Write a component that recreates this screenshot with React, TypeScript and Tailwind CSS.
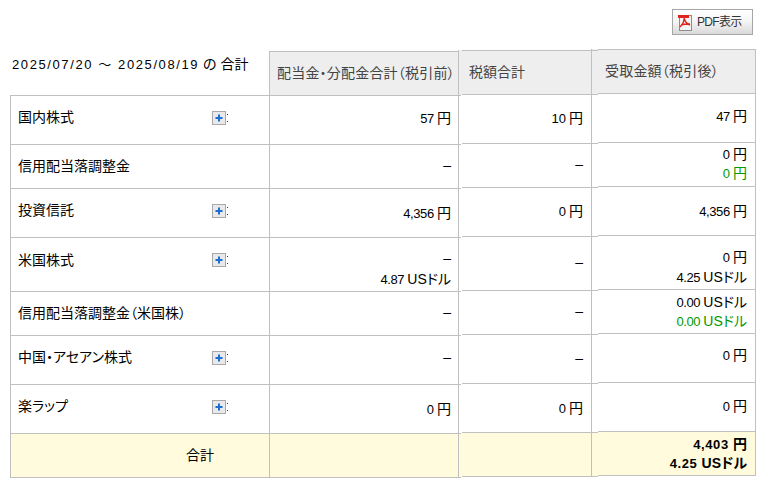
const font = "[font-family:'Liberation_Sans','Noto_Sans_CJK_JP',sans-serif] [font-feature-settings:'palt']";

function Num({ v, unit, bold }: { v: string; unit: string; bold?: boolean }) {
  const spaced = v.endsWith(" ");
  return (
    <span>
      <span className={bold ? "text-[13px] tracking-[0.6px]" : spaced ? "text-[13px] tracking-[-0.4px]" : "text-[13px] pr-[3px]"}>{v}</span>
      {unit}
    </span>
  );
}

function PlusIcon({ className }: { className: string }) {
  return (
    <svg width="17" height="15" viewBox="0 0 17 15" className={`shrink-0 ${className}`}>
      <rect x="0.5" y="0.5" width="13" height="13" fill="#e9e9e9" stroke="#a8a8a8" />
      <path d="M6 3.5h2V6h2.5v2H8v2.5H6V8H3.5V6H6z" fill="#1b6fd1" />
      <rect x="15" y="3" width="1" height="1" fill="#333" />
      <rect x="15" y="10" width="1" height="1" fill="#333" />
    </svg>
  );
}

function PdfIcon() {
  return (
    <svg width="15" height="17" viewBox="0 0 15 17" className="shrink-0">
      <rect x="1.5" y="1.5" width="12" height="15" fill="#f4f4f4" stroke="#8c8c8c" />
      <rect x="0" y="1" width="11" height="3" fill="#e0261c" />
      <path d="M6 4c1 4 3 6 6 7M6 5c0 3-2 6-4 8M3 11c3-1 6-1 9-1" fill="none" stroke="#e0261c" strokeWidth="1.4" />
    </svg>
  );
}

const heights = ["h-[49px]", "h-[44px]", "h-[49px]", "h-[54px]", "h-[44px]", "h-[49px]", "h-[49px]"];

const labels = [
  { text: "国内株式", plus: "mt-[2px]", pb: "pb-[6px]" },
  { text: "信用配当落調整金", plus: null, pb: "pb-[2px]" },
  { text: "投資信託", plus: "mt-[2px]", pb: "pb-[6px]" },
  { text: "米国株式", plus: "", pb: "pb-[9px]" },
  { text: "信用配当落調整金（米国株）", plus: null, pb: "pb-[2px]" },
  { text: "中国・アセアン株式", plus: "mt-[2px]", pb: "pb-[6px]" },
  { text: "楽ラップ", plus: "mt-[2px]", pb: "pb-[6px]" },
];

const green = "text-[#009900]";

const gross = [
  { lines: [<Num v="57 " unit="円" />], pb: "pb-[5px]" },
  { lines: ["–"], pb: "pb-[3px]" },
  { lines: [<Num v="4,356 " unit="円" />], pb: "" },
  { lines: ["–", <Num v="4.87 " unit="USドル" />], pb: "pt-[8px] gap-[2px]" },
  { lines: ["–"], pb: "pb-[3px]" },
  { lines: ["–"], pb: "pb-[6px]" },
  { lines: [<Num v="0" unit="円" />], pb: "" },
];

const tax = [
  { lines: [<Num v="10" unit="円" />], pb: "pb-[3px]" },
  { lines: ["–"], pb: "pb-[4px]" },
  { lines: [<Num v="0" unit="円" />], pb: "pb-[2px]" },
  { lines: ["–"], pb: "pb-[3px]" },
  { lines: ["–"], pb: "pb-[3px]" },
  { lines: ["–"], pb: "pb-[2px]" },
  { lines: [<Num v="0" unit="円" />], pb: "" },
];

const net = [
  { lines: [<Num v="47 " unit="円" />], pb: "pb-[5px]" },
  { lines: [<Num v="0" unit="円" />, <span className={green}><Num v="0" unit="円" /></span>], pb: "pb-[2px]" },
  { lines: [<Num v="4,356 " unit="円" />], pb: "pb-[1px]" },
  { lines: [<Num v="0" unit="円" />, <Num v="4.25 " unit="USドル" />], pb: "pt-[9px] gap-[1px]" },
  { lines: [<Num v="0.00 " unit="USドル" />, <span className={green}><Num v="0.00 " unit="USドル" /></span>], pb: "" },
  { lines: [<Num v="0" unit="円" />], pb: "pb-[7px]" },
  { lines: [<Num v="0" unit="円" />], pb: "pb-[3px]" },
];

const rule = "bg-[#c0c0c0] absolute h-px bottom-0 z-10";

function ValueColumn({
  width,
  top,
  title,
  titleClass,
  rows,
  total,
  ruleClass,
  topRuleClass,
  edge,
  pad,
}: {
  width: string;
  top: string;
  title: string;
  titleClass: string;
  rows: { lines: React.ReactNode[]; pb: string }[];
  total?: React.ReactNode[];
  ruleClass: string;
  topRuleClass: string;
  edge: string;
  pad: string;
}) {
  return (
    <div className={`${width} ${top} shrink-0 flex flex-col border-l border-[#c0c0c0] ${edge}`}>
      <div className={`relative h-[45px] bg-[#eeeeee] flex items-center text-[#444444] whitespace-nowrap ${titleClass}`}>
        <span className={topRuleClass} />
        {title}
        <span className={`${rule} ${ruleClass}`} />
      </div>
      {rows.map((r, i) => (
        <div key={i} className={`relative ${heights[i]} flex flex-col justify-center items-end leading-[19px] ${pad} ${r.pb}`}>
          {r.lines.map((l, j) => (
            <div key={j} className="whitespace-nowrap">{l}</div>
          ))}
          <span className={`${rule} ${ruleClass}`} />
        </div>
      ))}
      <div className={`relative h-[44px] bg-[#fffbdc] flex flex-col justify-center items-end leading-[19px] font-bold ${pad}`}>
        {total?.map((l, j) => (
          <div key={j} className="whitespace-nowrap">{l}</div>
        ))}
        <span className={`${rule} ${ruleClass}`} />
      </div>
    </div>
  );
}

export default function App() {
  return (
    <div className={`w-[768px] h-[486px] overflow-hidden bg-white text-[14px] text-black ${font}`}>
      <div className="flex justify-end pt-[9px] pr-[15px] mb-[14px]">
        <button className="w-[81px] h-[26px] flex items-center gap-[4px] pl-[5px] border border-[#a6a6a6] bg-gradient-to-b from-white via-[#f4f4f4] to-[#d9d9d9] text-[12px] tracking-[-0.7px] text-[#333333]">
          <PdfIcon />
          PDF表示
        </button>
      </div>

      <div className="flex items-start pl-[10px]">
        {/* label column */}
        <div className="w-[259px] shrink-0 mt-[2px] flex flex-col">
          <div className="h-[45px] pl-[2px] pt-[3px] whitespace-nowrap leading-[20px] relative">
            <span>
              <span className="text-[13px] tracking-[1.6px]">2025/07/20 ～ 2025/08/19</span> の 合計
            </span>
            <span className={`${rule} left-0 right-0`} />
          </div>
          {labels.map((l, i) => (
            <div key={l.text} className={`relative ${heights[i]} border-l border-[#c0c0c0] pl-[7px] pr-[40px] flex items-center justify-between ${l.pb}`}>
              <span className="whitespace-nowrap">{l.text}</span>
              {l.plus !== null && <PlusIcon className={l.plus} />}
              <span className={`${rule} left-0 right-0`} />
            </div>
          ))}
          <div className="relative h-[44px] border-l border-[#c0c0c0] bg-[#fffbdc] flex items-center pl-[175px] pb-[2px]">
            <span>合計</span>
            <span className={`${rule} left-0 right-0`} />
          </div>
        </div>

        <ValueColumn
          width="w-[189px]"
          top="mt-[2px]"
          title="配当金・分配金合計（税引前）"
          titleClass="pl-[7px] tracking-[0.2px]"
          rows={gross}
          ruleClass="left-0 -right-[3px]"
          topRuleClass="absolute top-0 left-0 right-0 h-px bg-[#c0c0c0]"
          edge=""
          pad="pr-[7px]"
        />
        <ValueColumn
          width="w-[133px]"
          top="mt-[1px]"
          title="税額合計"
          titleClass="pl-[10px]"
          rows={tax}
          ruleClass="left-[3px] -right-[7px]"
          topRuleClass="absolute top-0 left-[3px] -right-[7px] h-px bg-[#c0c0c0] z-10"
          edge=""
          pad="pr-[8px]"
        />
        <ValueColumn
          width="w-[165px]"
          top="mt-0"
          title="受取金額（税引後）"
          titleClass="pl-[13px] tracking-[0.2px]"
          rows={net}
          total={[<Num v="4,403 " unit="円" bold />, <Num v="4.25 " unit="USドル" bold />]}
          ruleClass="left-[6px] right-0"
          topRuleClass="absolute top-0 left-[6px] right-0 h-px bg-[#c0c0c0] z-10"
          edge="border-r"
          pad="pr-[8px]"
        />
      </div>
    </div>
  );
}
